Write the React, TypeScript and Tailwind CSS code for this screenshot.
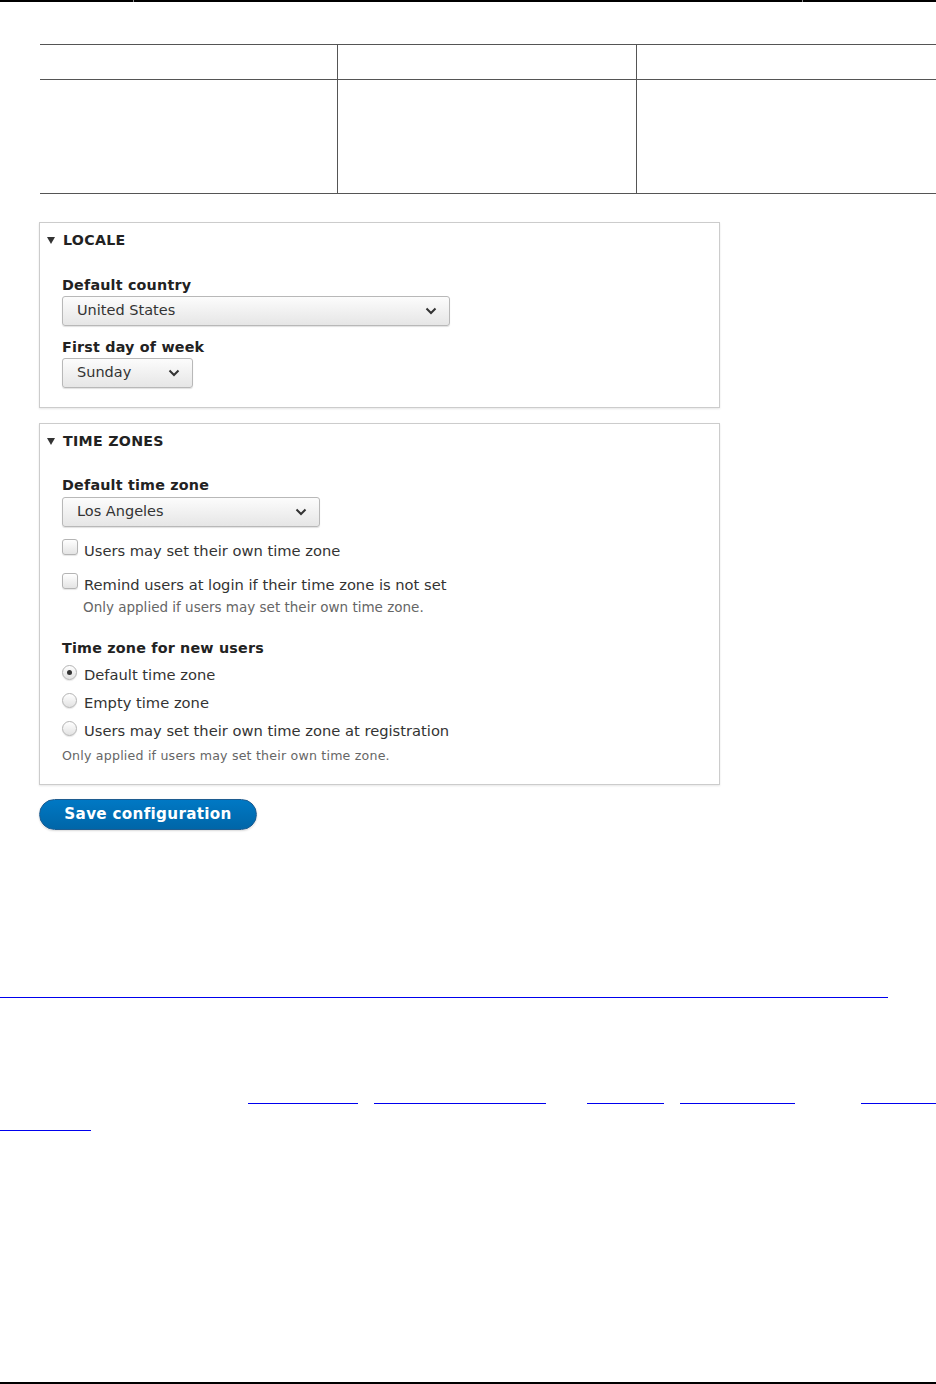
import React from "react";

const font = { fontFamily: '"DejaVu Sans", "Liberation Sans", sans-serif' };

function Chevron() {
  return (
    <svg width="12" height="8" viewBox="0 0 12 8" className="shrink-0">
      <polyline points="1.5,1.5 6,6 10.5,1.5" fill="none" stroke="#333" strokeWidth="2" />
    </svg>
  );
}

function Select({ value, width }: { value: string; width: string }) {
  return (
    <div
      className={`${width} h-[30px] flex items-center justify-between pl-[14px] pr-[12px] border border-[#b8b8b8] rounded-[3px] bg-gradient-to-b from-[#fcfcfc] to-[#e6e6e6] shadow-[0_1px_1px_rgba(0,0,0,0.12)] text-[14.5px] text-[#333]`}
    >
      <span>{value}</span>
      <Chevron />
    </div>
  );
}

function Checkbox() {
  return (
    <div className="w-[16px] h-[16px] rounded-[3px] border border-[#b4b4b4] bg-gradient-to-b from-[#ffffff] to-[#e4e4e4] shadow-[0_1px_1px_rgba(0,0,0,0.1)] shrink-0 -translate-y-[4px]" />
  );
}

function Radio({ checked }: { checked?: boolean }) {
  return (
    <div className="w-[15px] h-[15px] rounded-full border border-[#b4b4b4] bg-gradient-to-b from-[#ffffff] to-[#e2e2e2] shadow-[0_1px_1px_rgba(0,0,0,0.1)] shrink-0 flex items-center justify-center -translate-y-[3px]">
      {checked && <div className="w-[5px] h-[5px] rounded-full bg-[#333]" />}
    </div>
  );
}

function Title({ text }: { text: string }) {
  return (
    <div className="h-[33px] pt-[2px] flex items-center pl-[7px] gap-[8px]">
      <svg width="8" height="7" viewBox="0 0 8 7">
        <polygon points="0,0 8,0 4,7" fill="#333" />
      </svg>
      <span className="text-[14.2px] font-bold uppercase tracking-[0.3px] text-[#222]">{text}</span>
    </div>
  );
}

function Label({ text, className = "" }: { text: string; className?: string }) {
  return <div className={`h-[18px] flex items-center text-[14.3px] font-bold text-[#222] tracking-[0.2px] ${className}`}>{text}</div>;
}

export default function App() {
  return (
    <div className="relative w-[936px] h-[1384px] overflow-hidden bg-white flex flex-col" style={font}>
      {/* top line */}
      <div className="flex h-[2px] shrink-0">
        <div className="w-[133px] bg-black" />
        <div className="w-[1px] bg-[#888]" />
        <div className="w-[668px] bg-black" />
        <div className="w-[1px] bg-[#888]" />
        <div className="flex-1 bg-black" />
      </div>

      {/* table */}
      <div className="mt-[42px] ml-[40px] w-[897px] shrink-0 border-t border-b border-[#555]">
        <div className="grid grid-cols-[298px_299px_300px] h-[35px] border-b border-[#555]">
          <div className="border-r border-[#555]" />
          <div className="border-r border-[#555]" />
          <div />
        </div>
        <div className="grid grid-cols-[298px_299px_300px] h-[113px]">
          <div className="border-r border-[#555]" />
          <div className="border-r border-[#555]" />
          <div />
        </div>
      </div>

      {/* form */}
      <div className="ml-[39px] w-[681px] mt-[28px] flex flex-col">
        {/* Locale */}
        <div className="border border-[#ccc] shadow-[0_1px_2px_rgba(0,0,0,0.1)] pb-[19px]">
          <Title text="Locale" />
          <div className="pl-[22px] flex flex-col">
            <Label text="Default country" className="mt-[21px]" />
            <div className="mt-[1px]">
              <Select value="United States" width="w-[388px]" />
            </div>
            <Label text="First day of week" className="mt-[13px]" />
            <div className="mt-[1px]">
              <Select value="Sunday" width="w-[131px]" />
            </div>
          </div>
        </div>

        {/* Time zones */}
        <div className="mt-[15px] border border-[#ccc] shadow-[0_1px_2px_rgba(0,0,0,0.1)] pb-[20px]">
          <Title text="Time zones" />
          <div className="pl-[22px] flex flex-col">
            <Label text="Default time zone" className="mt-[20px]" />
            <div className="mt-[2px]">
              <Select value="Los Angeles" width="w-[258px]" />
            </div>
            <div className="mt-[15px] h-[18px] flex items-center gap-[6px] text-[14.7px] text-[#333]">
              <Checkbox />
              <span>Users may set their own time zone</span>
            </div>
            <div className="mt-[16px] h-[18px] flex items-center gap-[6px] text-[14.7px] text-[#333]">
              <Checkbox />
              <span>Remind users at login if their time zone is not set</span>
            </div>
            <div className="mt-[5px] h-[16px] flex items-center pl-[21px] text-[13.5px] text-[#666]">
              Only applied if users may set their own time zone.
            </div>
            <Label text="Time zone for new users" className="mt-[25px]" />
            <div className="mt-[8px] h-[18px] flex items-center gap-[7px] text-[14.7px] text-[#333]">
              <Radio checked />
              <span>Default time zone</span>
            </div>
            <div className="mt-[10px] h-[18px] flex items-center gap-[7px] text-[14.7px] text-[#333]">
              <Radio />
              <span>Empty time zone</span>
            </div>
            <div className="mt-[10px] h-[18px] flex items-center gap-[7px] text-[14.7px] text-[#333]">
              <Radio />
              <span>Users may set their own time zone at registration</span>
            </div>
            <div className="mt-[8px] h-[16px] flex items-center text-[12.6px] text-[#666] tracking-[0.2px]">
              Only applied if users may set their own time zone.
            </div>
          </div>
        </div>

        {/* Save */}
        <div className="mt-[14px]">
          <button className="w-[218px] h-[31px] rounded-full bg-gradient-to-b from-[#0078c4] to-[#0066a8] border border-[#1e5c90] text-white font-bold text-[15.2px] tracking-[0.3px] flex items-center justify-center shadow-[0_1px_2px_rgba(0,0,0,0.15)]">
            Save configuration
          </button>
        </div>
      </div>

      {/* link underlines */}
      <div className="mt-[167px] w-[888px] h-[1px] bg-[#0000ee] shrink-0" />
      <div className="mt-[105px] flex h-[1px] shrink-0">
        <div className="ml-[248px] w-[110px] bg-[#0000ee]" />
        <div className="ml-[16px] w-[172px] bg-[#0000ee]" />
        <div className="ml-[41px] w-[77px] bg-[#0000ee]" />
        <div className="ml-[16px] w-[115px] bg-[#0000ee]" />
        <div className="ml-[66px] w-[75px] bg-[#0000ee]" />
      </div>
      <div className="mt-[26px] w-[91px] h-[1px] bg-[#0000ee] shrink-0" />

      <div className="flex-1" />
      <div className="h-[2px] bg-black shrink-0" />
    </div>
  );
}
